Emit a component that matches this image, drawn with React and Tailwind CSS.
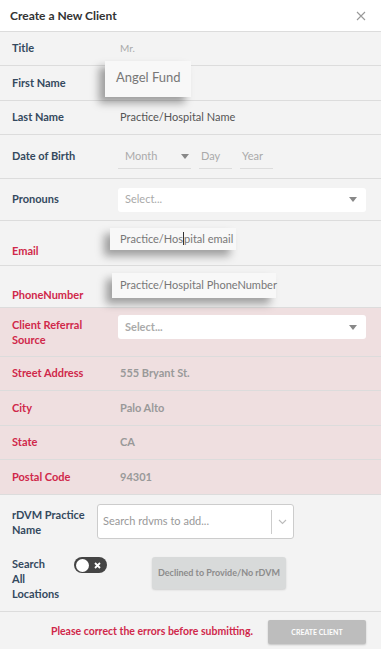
import React from 'react';

const LABEL = 'text-[11px] font-bold text-[#34495e] whitespace-nowrap';
const ERR = 'text-[11px] font-bold text-[#d0284a] whitespace-nowrap';

function Caret() {
  return (
    <svg width="8" height="5" viewBox="0 0 8 5" className="shrink-0">
      <path d="M0 0h8L4 5z" fill="#888" />
    </svg>
  );
}

function Row({ label, error, pink, h, children, labelClass = '' }) {
  return (
    <div className={`flex items-center border-b border-[#dcdcdc] ${pink ? 'bg-[#efdfe0]' : ''} ${h}`}>
      <div className={`w-[118px] shrink-0 pl-3 ${error ? ERR : LABEL} ${labelClass}`}>{label}</div>
      <div className="flex-1 pr-[15px] flex items-center">{children}</div>
    </div>
  );
}

function Floating({ className, children }) {
  return (
    <div className={`absolute whitespace-nowrap bg-[#f8f8f8] text-[#777] shadow-[-6px_6px_8px_rgba(0,0,0,0.35)] ${className}`}>
      {children}
    </div>
  );
}

export default function App() {
  return (
    <div
      className="w-[381px] h-[649px] bg-[#f3f3f3] relative overflow-hidden"
      style={{ fontFamily: 'Lato, "Noto Sans", sans-serif' }}
    >
      <div className="h-8 bg-white flex items-center justify-between pl-[10px] pr-[15px] border-b border-[#dcdcdc]">
        <span className="text-[12px] font-bold text-[#333]">Create a New Client</span>
        <svg width="10" height="10" viewBox="0 0 10 10">
          <path d="M1 1l8 8M9 1l-8 8" stroke="#999" strokeWidth="1.1" />
        </svg>
      </div>

      <Row label="Title" h="h-[34px]">
        <span className="text-[10px] text-[#aaa] pl-[2px]">Mr.</span>
      </Row>
      <Row label="First Name" h="h-[35px]" />
      <Row label="Last Name" h="h-[34px]">
        <span className="text-[11px] text-[#555] pl-[2px]">Practice/Hospital Name</span>
      </Row>
      <Row label="Date of Birth" h="h-[44px]">
        <div className="flex items-center gap-2 h-[24px] text-[11px] text-[#aaa]">
          <div className="w-[73px] h-full flex items-center justify-between pl-[7px] pr-[2px] border-b border-[#dcdcdc]">
            <span>Month</span>
            <Caret />
          </div>
          <div className="w-[33px] h-full flex items-center pl-[2px] border-b border-[#dcdcdc]">Day</div>
          <div className="w-[33px] h-full flex items-center pl-[2px] border-b border-[#dcdcdc]">Year</div>
        </div>
      </Row>
      <Row label="Pronouns" h="h-[42px]">
        <div className="w-full h-[24px] bg-white rounded-[3px] flex items-center justify-between pl-[7px] pr-[9px]">
          <span className="text-[11px] text-[#aaa]">Select...</span>
          <Caret />
        </div>
      </Row>
      <Row label="Email" error h="h-[45px]" labelClass="pt-[16px]" />
      <Row label="PhoneNumber" error h="h-[42px]" labelClass="pt-[18px]" />

      <div className="border-t border-[#dcdcdc] -mt-px" />
      <Row label={<>Client Referral<br />Source</>} error pink h="h-[49px]" labelClass="leading-[15px]">
        <div className="w-full h-[24px] bg-white rounded-[3px] flex items-center justify-between pl-[7px] pr-[9px] -mt-[10px]">
          <span className="text-[11px] font-bold text-[#aaa]">Select...</span>
          <Caret />
        </div>
      </Row>
      <Row label="Street Address" error pink h="h-[34px]">
        <span className="text-[11px] font-bold text-[#999] pl-[2px]">555 Bryant St.</span>
      </Row>
      <Row label="City" error pink h="h-[35px]">
        <span className="text-[11px] font-bold text-[#999] pl-[2px]">Palo Alto</span>
      </Row>
      <Row label="State" error pink h="h-[34px]">
        <span className="text-[11px] font-bold text-[#999] pl-[2px]">CA</span>
      </Row>
      <Row label="Postal Code" error pink h="h-[35px]">
        <span className="text-[11px] font-bold text-[#999] pl-[2px]">94301</span>
      </Row>

      <div className="pl-3 pt-[9px] pb-[10px] border-b border-[#dcdcdc]">
        <div className="flex items-start">
          <div className={`${LABEL} leading-[15px] w-[85px] pt-[3px]`}>rDVM Practice<br />Name</div>
          <div className="w-[197px] h-[35px] bg-white border border-[#ccc] rounded-[3px] flex items-center">
            <span className="flex-1 pl-[5px] text-[11px] text-[#999]">Search rdvms to add...</span>
            <div className="w-px h-[24px] bg-[#ccc]" />
            <div className="w-[21px] flex justify-center">
              <svg width="9" height="6" viewBox="0 0 9 6">
                <path d="M1 1l3.5 3.5L8 1" stroke="#bbb" strokeWidth="1.1" fill="none" />
              </svg>
            </div>
          </div>
        </div>
        <div className="flex items-start mt-[17px]">
          <div className={`${LABEL} leading-[15px] w-[62px]`}>Search<br />All<br />Locations</div>
          <div className="w-[33px] h-[16px] rounded-full bg-[#444] flex items-center justify-between px-[2px] mt-[1px]">
            <div className="w-[13px] h-[13px] rounded-full bg-white" />
            <svg width="7" height="7" viewBox="0 0 7 7" className="mr-[4px]">
              <path d="M1 1l5 5M6 1l-5 5" stroke="#fff" strokeWidth="1.8" />
            </svg>
          </div>
          <div className="ml-[45px] mt-[1px] w-[134px] h-[32px] bg-[#d8dada] rounded-[3px] shadow-[0_1px_2px_rgba(0,0,0,0.15)] flex items-center justify-center text-[9px] font-bold text-[#8c8c8c] whitespace-nowrap">
            Declined to Provide/No rDVM
          </div>
        </div>
      </div>

      <div className="flex items-center justify-end gap-[15px] pr-[15px] pt-[8px]">
        <span className="text-[10.5px] font-bold text-[#d0284a] whitespace-nowrap">Please correct the errors before submitting.</span>
        <div className="w-[98px] h-[24px] bg-[#bdbdbd] rounded-[2px] shadow-[0_1px_2px_rgba(0,0,0,0.2)] flex items-center justify-center text-[7px] font-bold text-white">
          CREATE CLIENT
        </div>
      </div>

      <Floating className="left-[105px] top-[61px] w-[86px] h-[36px] pl-[11px] pt-[7px] text-[13px]">Angel Fund</Floating>
      <Floating className="left-[110px] top-[228px] w-[126px] h-[22px] pl-[10px] pt-[3px] text-[11px]">
        Practice/Hos<span className="border-l border-[#333]">p</span>ital email
      </Floating>
      <Floating className="left-[112px] top-[273px] w-[164px] h-[25px] pl-[8px] pt-[4px] text-[11px]">Practice/Hospital PhoneNumber</Floating>
    </div>
  );
}
